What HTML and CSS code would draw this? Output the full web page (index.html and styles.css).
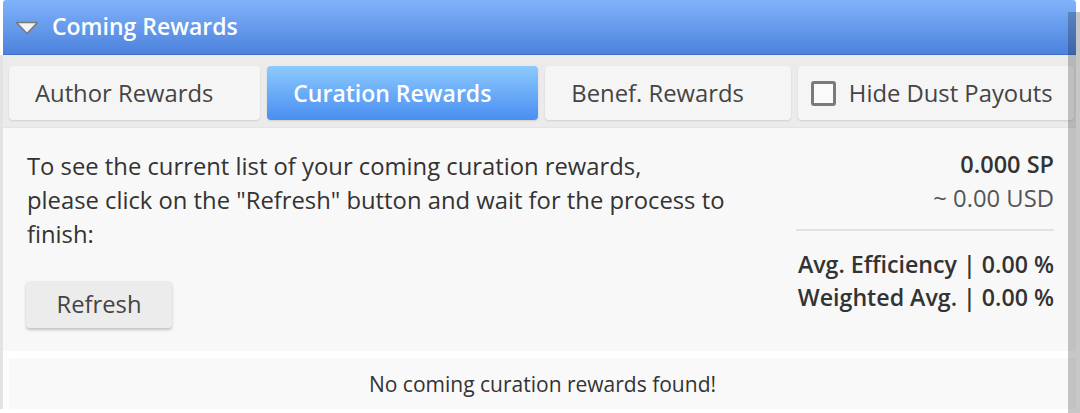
FILE: index.html
```html
<!DOCTYPE html>
<html>
<head>
<meta charset="utf-8">
<link rel="stylesheet" href="styles.css">
</head>
<body>
<div class="page">
  <div class="header">
    <svg class="caret" width="24" height="14" viewBox="0 0 24 14"><polygon points="1.5,1.5 22.5,1.5 12,12.5" fill="#f4f4f4" stroke="#7a7a7a" stroke-width="1.6" stroke-linejoin="round"/></svg>
    <span class="title">Coming Rewards</span>
  </div>
  <div class="content">
    <div class="tabs">
      <div class="tab">Author Rewards</div>
      <div class="tab active">Curation Rewards</div>
      <div class="tab">Benef. Rewards</div>
      <div class="tab check"><span class="box"></span>Hide Dust Payouts</div>
    </div>
    <div class="main">
      <div class="left">
        <p class="info">To see the current list of your coming curation rewards,<br>please click on the "Refresh" button and wait for the process to finish:</p>
        <div class="btn">Refresh</div>
      </div>
      <div class="right">
        <div class="sp">0.000 SP</div>
        <div class="usd">~ 0.00 USD</div>
        <div class="rule"></div>
        <div class="stat">Avg. Efficiency | 0.00 %</div>
        <div class="stat">Weighted Avg. | 0.00 %</div>
      </div>
    </div>
    <div class="empty">No coming curation rewards found!</div>
  </div>
  <div class="scroll"></div>
</div>
</body>
</html>
```

FILE: styles.css
```css
html, body {
  margin: 0;
  padding: 0;
  background: #ffffff;
}
body {
  font-family: "Open Sans", "Liberation Sans", sans-serif;
  color: #333333;
  width: 1080px;
  height: 413px;
  overflow: hidden;
}
.page {
  position: relative;
  width: 1076px;
  height: 413px;
}
.header {
  margin-left: 3px;
  height: 55px;
  box-sizing: border-box;
  display: flex;
  align-items: center;
  background: linear-gradient(#80b3fb, #4c82dd);
  border-bottom: 1px solid #3f72c8;
  border-radius: 3px 3px 0 0;
}
.caret {
  margin-left: 12px;
  margin-right: 13px;
  margin-top: 2px;
}
.title {
  color: #ffffff;
  font-size: 23px;
  font-weight: 600;
  margin-top: -2px;
}
.content {
  border-left: 3px solid #e3e3e3;
  background: #ffffff;
}
.tabs {
  display: flex;
  gap: 7px;
  background: #ebebeb;
  padding: 11px 2px 7px 6px;
  border-bottom: 1px solid #e4e4e4;
}
.tab {
  height: 54px;
  box-sizing: border-box;
  display: flex;
  align-items: center;
  padding: 0 47px 0 26px;
  background: #f5f5f5;
  border-radius: 4px;
  box-shadow: 0 1px 2px rgba(0,0,0,0.12);
  font-size: 23.8px;
  color: #444444;
  white-space: nowrap;
}
.tab.active {
  background: linear-gradient(#8ccafd, #4a8ef1);
  color: #ffffff;
  font-weight: 600;
  font-size: 23px;
}
.tab.check {
  flex: 1;
  padding: 0 20px 0 13px;
}
.box {
  width: 25px;
  height: 25px;
  box-sizing: border-box;
  border: 3px solid #7a7a7a;
  border-radius: 3px;
  background: #fafafa;
  margin-right: 13px;
}
.main {
  display: flex;
  background: #f8f8f8;
  padding: 21px 22px 23px 24px;
}
.left {
  flex: 1;
}
.info {
  margin: 0;
  width: 720px;
  font-size: 23.8px;
  line-height: 34px;
  color: #333333;
}
.btn {
  margin-top: 30px;
  margin-left: -1px;
  width: 146px;
  height: 47px;
  box-sizing: border-box;
  line-height: 47px;
  text-align: center;
  background: #ececec;
  border-radius: 4px;
  box-shadow: 0 2px 3px rgba(0,0,0,0.22);
  font-size: 23.8px;
  color: #444444;
}
.right {
  width: 258px;
  margin-top: -2px;
  text-align: right;
  font-size: 23.8px;
  line-height: 34px;
  color: #333333;
}
.sp {
  font-weight: 600;
  font-size: 23.5px;
}
.usd {
  color: #555555;
}
.rule {
  height: 2px;
  background: #e2e2e2;
  margin: 14px 0 17px 0;
}
.stat {
  font-weight: 600;
  font-size: 23.2px;
  line-height: 33px;
}
.empty {
  margin-top: 7px;
  margin-left: 6px;
  background: #f9f9f9;
  height: 51px;
  display: flex;
  align-items: center;
  justify-content: center;
  font-size: 21px;
  color: #333333;
}
.scroll {
  position: absolute;
  top: 12px;
  right: -4px;
  width: 12px;
  bottom: 0;
  background: rgba(0,0,0,0.22);
}
```
